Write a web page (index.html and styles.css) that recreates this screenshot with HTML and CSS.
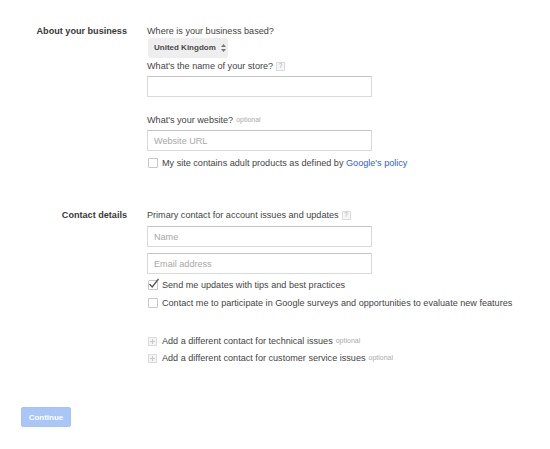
FILE: index.html
```html
<!DOCTYPE html>
<html>
<head>
<meta charset="utf-8">
<link rel="stylesheet" href="styles.css">
</head>
<body>
<main class="page">
  <section class="sec sec-business">
    <h2 class="sec-title">About your business</h2>
    <div class="fields">
      <div class="q">Where is your business based?</div>
      <div class="select">United Kingdom
        <svg class="sel-arrows" width="5" height="8" viewBox="0 0 5 8"><path d="M0 3 L2.5 0 L5 3 Z M0 5 L2.5 8 L5 5 Z" fill="#777"/></svg>
      </div>
      <div class="q">What's the name of your store? <span class="help">?</span></div>
      <input class="text mt3" type="text">
      <div class="q q-gap">What's your website? <span class="opt">optional</span></div>
      <input class="text mt3" type="text" placeholder="Website URL">
      <label class="check-row mt5"><span class="box"></span>My site contains adult products as defined by&nbsp;<a class="link" href="#">Google's policy</a></label>
    </div>
  </section>

  <section class="sec sec-contact">
    <h2 class="sec-title">Contact details</h2>
    <div class="fields">
      <div class="q">Primary contact for account issues and updates <span class="help">?</span></div>
      <input class="text mt4" type="text" placeholder="Name">
      <input class="text mt6" type="text" placeholder="Email address">
      <label class="check-row mt4"><span class="box checked"><svg class="tick" width="12" height="11" viewBox="0 0 12 11"><path d="M1.5 6 L4.2 9 L10.5 1" fill="none" stroke="#555" stroke-width="1.3"/></svg></span>Send me updates with tips and best practices</label>
      <label class="check-row mt4"><span class="box"></span>Contact me to participate in Google surveys and opportunities to evaluate new features</label>
      <div class="add-row mt24"><span class="plus"></span>Add a different contact for technical issues <span class="opt">optional</span></div>
      <div class="add-row mt3"><span class="plus"></span>Add a different contact for customer service issues <span class="opt">optional</span></div>
    </div>
  </section>

  <div class="actions">
    <button class="btn-continue" type="button">Continue</button>
  </div>
</main>
</body>
</html>
```

FILE: styles.css
```css
* { box-sizing: border-box; }
html, body { margin: 0; padding: 0; background: #fff; }
body {
  font-family: "Liberation Sans", Arial, sans-serif;
  font-size: 9.1px;
  line-height: 14px;
  color: #444;
}
.page { padding-top: 24px; }
.sec {
  display: grid;
  grid-template-columns: 127px 1fr;
  column-gap: 20px;
}
.sec-contact { margin-top: 38px; }
.sec-title {
  margin: 0;
  font-size: 9.1px;
  line-height: 14px;
  font-weight: bold;
  text-align: right;
  color: #383838;
}
.fields { display: flex; flex-direction: column; align-items: flex-start; }
.q { height: 14px; display: flex; align-items: center; white-space: nowrap; }
.q-gap { margin-top: 16px; }
.mt3 { margin-top: 3px; }
.mt4 { margin-top: 4px; }
.mt5 { margin-top: 5px; }
.mt6 { margin-top: 6px; }
.mt24 { margin-top: 24px; }
.select {
  margin-left: 1px;
  width: 80px;
  height: 20px;
  background: #eeeeee;
  border-radius: 3px;
  font-size: 8px;
  font-weight: bold;
  color: #4a4a4a;
  display: flex;
  align-items: center;
  padding-left: 6px;
  gap: 5px;
  margin-bottom: 1px;
}
.sel-arrows { display: block; }
.help {
  display: inline-flex;
  align-items: center;
  justify-content: center;
  width: 9px;
  height: 9px;
  margin-left: 3px;
  border: 1px solid #dcdcdc;
  background: #f6f6f6;
  color: #aaa;
  font-size: 6.5px;
  line-height: 1;
}
.opt { font-size: 7px; color: #aaa; margin-left: 3px; }
.text {
  display: block;
  width: 225px;
  height: 21px;
  border: 1px solid #d9d9d9;
  border-top-color: #c4c4c4;
  border-radius: 1px;
  padding: 0 6px;
  font-family: inherit;
  font-size: 9.1px;
  color: #333;
  background: #fff;
  outline: none;
}
.text::placeholder { color: #a8a8a8; }
.check-row, .add-row {
  display: flex;
  align-items: center;
  height: 14px;
  white-space: nowrap;
}
.box {
  position: relative;
  width: 10px;
  height: 10px;
  margin-left: 1px;
  margin-right: 4px;
  border: 1px solid #c8c8c8;
  border-radius: 1px;
  background: #fff;
  flex: none;
}
.tick { position: absolute; left: -1px; top: -3px; }
.link { color: #2f62c9; text-decoration: none; }
.plus {
  position: relative;
  width: 9px;
  height: 9px;
  margin-left: 1px;
  margin-right: 5px;
  border: 1px solid #dcdcdc;
  background: #f4f4f4;
  flex: none;
}
.plus::before, .plus::after {
  content: "";
  position: absolute;
  background: #c9c9c9;
}
.plus::before { left: 1px; right: 1px; top: 3px; height: 1px; }
.plus::after { top: 1px; bottom: 1px; left: 3px; width: 1px; }
.actions { margin-top: 42px; padding-left: 21px; }
.btn-continue {
  width: 50px;
  height: 20px;
  border: 1px solid #a7c3f5;
  border-radius: 2px;
  background: #a9c6f8;
  color: #fff;
  font-family: inherit;
  font-weight: bold;
  font-size: 8px;
  padding: 0;
}
```
